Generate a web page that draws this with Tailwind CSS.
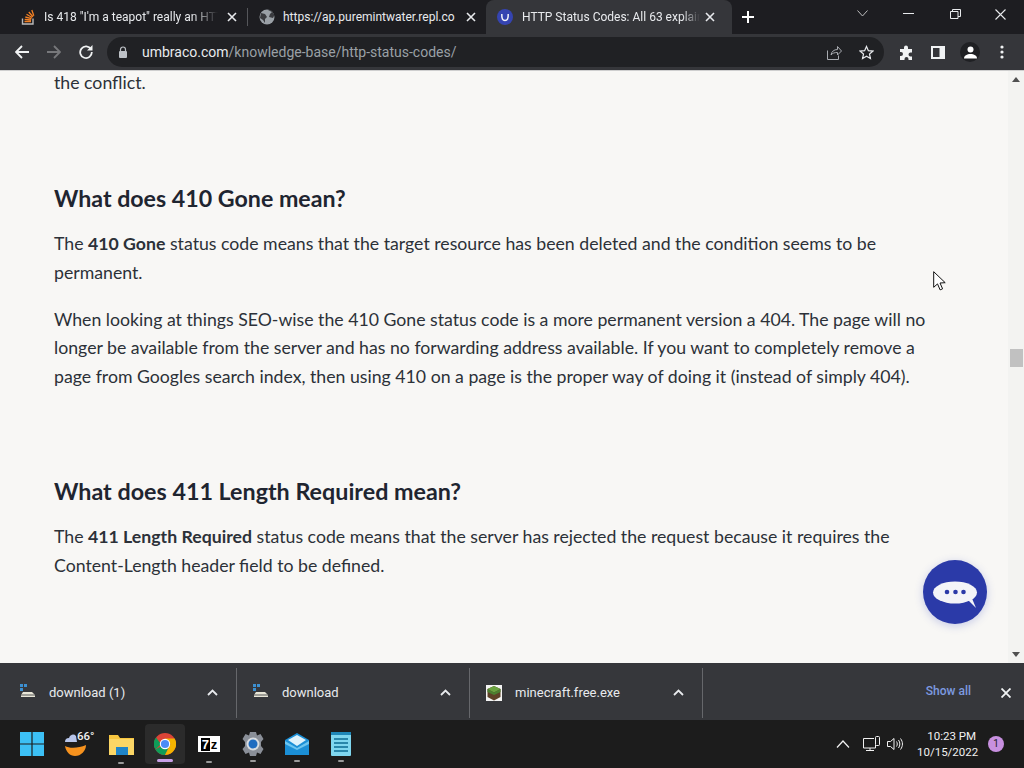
<!DOCTYPE html>
<html><head><meta charset="utf-8"><script src="https://cdn.jsdelivr.net/npm/@tailwindcss/browser@4"></script></head>
<body class="m-0 overflow-hidden bg-[#202124]">
<div class="w-[1024px] h-[768px] flex flex-col overflow-hidden font-['Roboto',sans-serif]">
  <!-- Tab strip -->
  <div class="h-[34px] shrink-0 bg-[#1d1d21] flex items-stretch text-[12px] text-[#e8eaed]">
    <div class="w-[248px] pl-[21px] flex items-center relative">
      <svg class="w-[14px] h-[16px] shrink-0" viewBox="0 0 14 16"><path d="M1.500 9.500v5.500h10.500V9.500" fill="none" stroke="#bcbbbb" stroke-width="1.400"/><path d="M3.500 12.500h6.500M3.700 10.400l6.400.6M4.300 8l6.200 1.700M5.500 5.300l5.600 3.200M7.800 3l4.200 4.800M10.800 1l2 5.700" stroke="#f48024" stroke-width="1.300" fill="none"/></svg>
      <span class="ml-[9px] w-[174px] whitespace-nowrap overflow-hidden [mask-image:linear-gradient(to_right,black_85%,transparent)]">Is 418 "I'm a teapot" really an HTTP</span>
      <svg class="ml-[9px] w-[10px] h-[10px]" viewBox="0 0 10 10"><path d="M1 1l8 8M9 1l-8 8" stroke="#e8eaed" stroke-width="1.600"/></svg>
      <div class="absolute right-0 top-[8px] h-[18px] w-px bg-[#55565a]"></div>
    </div>
    <div class="w-[238px] pl-[11px] flex items-center">
      <svg class="w-[16px] h-[16px] shrink-0" viewBox="0 0 16 16"><circle cx="8" cy="8" r="7.500" fill="#9aa0a6"/><path d="M2 4l4 1 2 3-2 2 0 4-2-3-3-2zM9 1l4 2-2 2-1 3 4 1 1-2 0-2-3-4z" fill="#3a3b3f"/></svg>
      <span class="ml-[8px] w-[175px] whitespace-nowrap overflow-hidden">https://ap.puremintwater.repl.co</span>
      <svg class="ml-[8px] w-[10px] h-[10px]" viewBox="0 0 10 10"><path d="M1 1l8 8M9 1l-8 8" stroke="#e8eaed" stroke-width="1.600"/></svg>
    </div>
    <div class="w-[246px] pl-[11px] flex items-center bg-[#35363a] rounded-t-[8px]">
      <svg class="w-[16px] h-[16px] shrink-0" viewBox="0 0 16 16"><circle cx="8" cy="8" r="8" fill="#3544b1"/><path d="M4.800 5c-.2 5 1 6.500 3.200 6.500S11.400 10 11.200 5" stroke="#f3f4f8" stroke-width="1.500" fill="none"/></svg>
      <span class="ml-[9px] w-[178px] whitespace-nowrap overflow-hidden [mask-image:linear-gradient(to_right,black_90%,transparent)]">HTTP Status Codes: All 63 explained</span>
      <svg class="ml-[5px] w-[10px] h-[10px]" viewBox="0 0 10 10"><path d="M1 1l8 8M9 1l-8 8" stroke="#e8eaed" stroke-width="1.600"/></svg>
    </div>
    <div class="w-[31px] flex items-center justify-center">
      <svg class="w-[12px] h-[12px]" viewBox="0 0 12 12"><path d="M6 0v12M0 6h12" stroke="#fff" stroke-width="2"/></svg>
    </div>
    <div class="flex-1 flex items-start pl-[94px] pt-[10px]">
      <svg class="w-[11px] h-[7px]" viewBox="0 0 11 7"><path d="M.5.500l5 5.500 5-5.500" stroke="#bdbdbd" fill="none"/></svg>
      <svg class="ml-[35px] mt-[3px] w-[11px] h-[1px]" viewBox="0 0 11 1"><path d="M0 .5h11" stroke="#e8eaed"/></svg>
      <svg class="ml-[36px] w-[11px] h-[10px] -mt-[1px]" viewBox="0 0 11 10"><path d="M.5 2.500h7.500v7H.5zM2.500 2.500V.5h8v7H8" stroke="#e8eaed" fill="none"/></svg>
      <svg class="ml-[34px] w-[11px] h-[11px] -mt-[1px]" viewBox="0 0 11 11"><path d="M.5.500l10 10M10.500.500l-10 10" stroke="#e8eaed" stroke-width="1.100"/></svg>
    </div>
  </div>
  <!-- Toolbar -->
  <div class="h-[36px] shrink-0 bg-[#35363a] flex items-center">
    <svg class="ml-[15px] w-[14px] h-[14px]" viewBox="0 0 14 14"><path d="M7 1L1 7l6 6M1 7h13" stroke="#f1f3f4" stroke-width="1.800" fill="none"/></svg>
    <svg class="ml-[18px] w-[14px] h-[14px]" viewBox="0 0 14 14"><path d="M7 1l6 6-6 6M13 7H0" stroke="#77787b" stroke-width="1.800" fill="none"/></svg>
    <svg class="ml-[18px] w-[14px] h-[14px]" viewBox="0 0 14 14"><path d="M12 4.300A5.800 5.800 0 1 0 12.800 7" stroke="#f1f3f4" stroke-width="1.800" fill="none"/><path d="M13.500 0v5.500H8z" fill="#f1f3f4"/></svg>
    <div class="ml-[14px] w-[777px] h-[30px] rounded-full bg-[#202124] flex items-center">
      <svg class="ml-[11px] w-[10px] h-[12px]" viewBox="0 0 10 12"><path d="M2.500 5V3.500a2.500 2.500 0 0 1 5 0V5" stroke="#bdc1c6" stroke-width="1.200" fill="none"/><rect x="1" y="5" width="8" height="7" rx="1" fill="#bdc1c6"/></svg>
      <span class="ml-[14px] text-[14px]"><span class="text-[#e8eaed]">umbraco.com</span><span class="text-[#9aa0a6]">/knowledge-base/http-status-codes/</span></span>
      <div class="ml-auto flex items-center mr-[10px] gap-[17px]">
        <svg class="w-[15px] h-[15px]" viewBox="0 0 15 15"><path d="M.5 5.500v9h11v-4M4 10c.5-3.500 3-5.500 6.500-5.500V1.500l4 4.500-4 4V7.500C7.500 7.500 5.500 8 4 10z" stroke="#a8abb0" fill="none"/></svg>
        <svg class="w-[15px] h-[15px]" viewBox="0 0 16 16"><path d="M8 1.500l2 4.500 4.800.5-3.600 3.200 1 4.800L8 12l-4.200 2.500 1-4.800L1.200 6.500 6 6z" stroke="#e8eaed" stroke-width="1.300" fill="none"/></svg>
      </div>
    </div>
    <svg class="ml-[15px] w-[15px] h-[15px]" viewBox="0 0 15 15"><path d="M5 2.500a2 2 0 0 1 4 0V4h4v3.500h-1.500a2 2 0 0 0 0 4H13V15H9.500v-1a2 2 0 0 0-4 0v1H1v-4h1a2 2 0 0 0 0-4H1V4h4z" fill="#f1f3f4"/></svg>
    <svg class="ml-[17px] w-[14px] h-[13px]" viewBox="0 0 14 13"><path d="M0 0h14v13H0z" fill="#f1f3f4"/><path d="M2 2h6.500v9H2z" fill="#35363a"/></svg>
    <div class="ml-[15px] w-[20px] h-[20px] rounded-full bg-[#1f2023] flex items-center justify-center">
      <svg class="w-[13px] h-[13px]" viewBox="0 0 13 13"><circle cx="6.500" cy="3.500" r="3" fill="#fff"/><path d="M0 12.500c0-3 3-4.500 6.500-4.500s6.500 1.500 6.500 4.500z" fill="#fff"/></svg>
    </div>
    <svg class="ml-[20px] w-[4px] h-[14px]" viewBox="0 0 4 14"><circle cx="2" cy="2" r="1.600" fill="#f1f3f4"/><circle cx="2" cy="7" r="1.600" fill="#f1f3f4"/><circle cx="2" cy="12" r="1.600" fill="#f1f3f4"/></svg>
  </div>
  <!-- Page -->
  <div class="h-[593px] shrink-0 bg-[#f8f7f5] relative flex overflow-hidden border-t border-[#cfcfcf]">
    <div class="flex-1 pl-[54px] pr-[80px] -mt-[2.4px] font-['Lato',sans-serif] text-[17.7px] leading-[28.8px] text-[#2c3138]">
      <p>the conflict.</p>
      <h2 class="mt-[86px] mb-[16px] text-[23.2px] leading-[31px] font-bold text-[#1f2530]">What does 410 Gone mean?</h2>
      <p class="mb-[17.6px]">The <b>410 Gone</b> status code means that the target resource has been deleted and the condition seems to be permanent.</p>
      <p>When looking at things SEO-wise the 410 Gone status code is a more permanent version a 404. The page will no longer be available from the server and has no forwarding address available. If you want to completely remove a page from Googles search index, then using 410 on a page is the proper way of doing it (instead of simply 404).</p>
      <h2 class="mt-[84.5px] mb-[16px] text-[23.3px] leading-[31px] font-bold text-[#1f2530]">What does 411 Length Required mean?</h2>
      <p>The <b>411 Length Required</b> status code means that the server has rejected the request because it requires the Content-Length header field to be defined.</p>
    </div>
    <div class="w-[16px] shrink-0 bg-[#f3f3f1] flex flex-col items-center pt-[6px] pb-[6px]">
      <svg class="w-[8px] h-[5px]" viewBox="0 0 8 5"><path d="M4 0l4 5H0z" fill="#505050"/></svg>
      <div class="mt-[267px] w-[13px] h-[18px] bg-[#c1c1c1]"></div>
      <svg class="mt-auto w-[8px] h-[5px]" viewBox="0 0 8 5"><path d="M0 0h8L4 5z" fill="#505050"/></svg>
    </div>
    <svg class="absolute left-[933px] top-[200px] w-[13px] h-[20px]" viewBox="0 0 13 20"><path d="M.7.700v15.600l3.800-3.400 2.600 6 2.500-1.100-2.600-5.800 5.200-.3z" fill="#fff" stroke="#111" stroke-width="1"/></svg>
    <div class="absolute left-[923px] top-[489px] w-[64px] h-[64px] rounded-full bg-[#2b3aa8] shadow-[0_2px_8px_rgba(50,70,190,0.25)] flex items-center justify-center">
      <svg class="w-[46px] h-[36px]" viewBox="0 0 46 36"><ellipse cx="23" cy="18.500" rx="22" ry="11" fill="#f3f4f8"/><path d="M36 26l8 8-5-12z" fill="#f3f4f8"/><circle cx="15" cy="18" r="2.300" fill="#2b3aa8"/><circle cx="23.500" cy="18" r="2.300" fill="#2b3aa8"/><circle cx="31.500" cy="18" r="2.300" fill="#2b3aa8"/></svg>
    </div>
  </div>
  <!-- Download shelf -->
  <div class="h-[57px] shrink-0 bg-[#36373b] flex items-center text-[13px] text-[#e8eaed] pt-[2px]">
    <div class="w-[237px] h-[50px] pl-[20px] flex items-center border-r border-[#66676b]">
      <svg class="w-[16px] h-[13px] -mt-[5px]" viewBox="0 0 16 13"><path d="M0 0h3v3H0zM4 0h3v3H4zM0 4h3v3H0z" fill="#3c8fd0"/><path d="M3 8h9l3 3v2H1v-2z" fill="#e8e6d8"/><path d="M1 11h14" stroke="#555"/></svg>
      <span class="ml-[13px]">download (1)</span>
      <svg class="ml-auto mr-[18px] w-[11px] h-[7px]" viewBox="0 0 11 7"><path d="M1 6l4.500-4.500L10 6" stroke="#e8eaed" stroke-width="1.800" fill="none"/></svg>
    </div>
    <div class="w-[233px] h-[50px] pl-[16px] flex items-center border-r border-[#66676b]">
      <svg class="w-[16px] h-[13px] -mt-[5px]" viewBox="0 0 16 13"><path d="M0 0h3v3H0zM4 0h3v3H4zM0 4h3v3H0z" fill="#3c8fd0"/><path d="M3 8h9l3 3v2H1v-2z" fill="#e8e6d8"/><path d="M1 11h14" stroke="#555"/></svg>
      <span class="ml-[13px]">download</span>
      <svg class="ml-auto mr-[18px] w-[11px] h-[7px]" viewBox="0 0 11 7"><path d="M1 6l4.500-4.500L10 6" stroke="#e8eaed" stroke-width="1.800" fill="none"/></svg>
    </div>
    <div class="w-[233px] h-[50px] pl-[16px] flex items-center border-r border-[#66676b]">
      <svg class="w-[16px] h-[16px]" viewBox="0 0 16 16"><rect width="16" height="16" fill="#f4f4f4"/><path d="M8 1l6.500 3v8L8 15.500 1.500 12V4z" fill="#5e4127"/><path d="M8 1l6.500 3L8 7.500 1.500 4z" fill="#6aa340"/><path d="M1.500 4L8 7.500V10L1.500 7zM14.500 4L8 7.500V10l6.500-3z" fill="#4c8030"/></svg>
      <span class="ml-[13px]">minecraft.free.exe</span>
      <svg class="ml-auto mr-[18px] w-[11px] h-[7px]" viewBox="0 0 11 7"><path d="M1 6l4.500-4.500L10 6" stroke="#e8eaed" stroke-width="1.800" fill="none"/></svg>
    </div>
    <div class="flex-1 flex items-center justify-end">
      <span class="text-[12px] font-medium text-[#7d9ae0] mr-[30px] -mt-[4px]">Show all</span>
      <svg class="mr-[13px] w-[10px] h-[10px]" viewBox="0 0 10 10"><path d="M.5.500l9 9M9.500.500l-9 9" stroke="#f1f3f4" stroke-width="1.800"/></svg>
    </div>
  </div>
  <!-- Taskbar -->
  <div class="h-[48px] shrink-0 bg-[#1c1c1c] flex items-center">
    <svg class="ml-[20px] w-[24px] h-[24px]" viewBox="0 0 24 24"><path d="M0 0h11.400v11.400H0zM12.600 0H24v11.400H12.600zM0 12.600h11.400V24H0zM12.600 12.600H24V24H12.600z" fill="#3cc0f5"/></svg>
    <div class="ml-[20px] w-[32px] h-[32px] relative">
      <svg class="w-[24px] h-[26px] mt-[3px]" viewBox="0 0 24 26"><path d="M1 11a4 4 0 0 1 4-4 4 4 0 0 1 7-2l1 6z" fill="#b7c5ea"/><path d="M1 15c5 3 14 2 21-1 0 6-5 11-11 11-5 0-9-4-10-10z" fill="#f6921e"/></svg>
      <span class="absolute left-[13px] top-[1px] text-[11.5px] leading-[14px] font-medium text-[#f1f1f1]">66°</span>
    </div>
    <div class="ml-[12px] w-[26px] relative flex justify-center">
      <svg class="w-[25px] h-[22px]" viewBox="0 0 25 22"><path d="M0 2h9l2 3h14v4H0z" fill="#f7c63f"/><path d="M0 6h25v16H0z" fill="#fbd665"/><rect x="7" y="14" width="12" height="8" fill="#1f85c9"/></svg>
      <div class="absolute left-[10px] top-[29px] w-[6px] h-[2px] rounded bg-[#9a9a9a]"></div>
    </div>
    <div class="ml-[11px] w-[40px] h-[40px] rounded-[4px] bg-[#2b2b2b] relative flex items-center justify-center">
      <svg class="w-[22px] h-[22px]" viewBox="0 0 22 22"><circle cx="11" cy="11" r="11" fill="#db4437"/><path d="M11 11L1.400 16.500A11 11 0 0 0 11 22L16.500 11z" fill="#0f9d58"/><path d="M11 22a11 11 0 0 0 9.600-16.500H11L16.500 11z" fill="#f4b400"/><path d="M1.400 16.500A11 11 0 0 1 2 4.500L7 11z" fill="#0f9d58"/><circle cx="11" cy="11" r="5.200" fill="#fff"/><circle cx="11" cy="11" r="4.100" fill="#4a8bf5"/></svg>
      <div class="absolute left-[12px] bottom-[2px] w-[16px] h-[3px] rounded bg-[#c9a0e8]"></div>
    </div>
    <div class="ml-[13px] w-[22px] relative flex justify-center">
      <div class="w-[22px] h-[16px] bg-white flex items-center justify-center gap-[1px] font-['Liberation_Sans',sans-serif] text-[13px] leading-[13px] font-bold"><span class="bg-black text-white px-[1px]">7</span><span class="bg-white text-black">z</span></div>
      <div class="absolute left-[8px] top-[25px] w-[6px] h-[2px] rounded bg-[#9a9a9a]"></div>
    </div>
    <div class="ml-[21px] w-[24px] relative flex justify-center">
      <svg class="w-[24px] h-[24px]" viewBox="0 0 24 24"><path d="M9 0h6l1 3.500 3.500-1.500 3 5-2.500 3v4l2.500 3-3 5-3.500-1.500L15 24H9l-1-3.500L4.500 22l-3-5L4 14v-4L1.500 7l3-5L8 3.500z" fill="#8a8f98"/><circle cx="12" cy="12" r="6.500" fill="#d8dce0"/><circle cx="12" cy="12" r="4.500" fill="#1f6cc0"/></svg>
      <div class="absolute left-[9px] top-[28px] w-[6px] h-[2px] rounded bg-[#9a9a9a]"></div>
    </div>
    <div class="ml-[20px] w-[24px] relative flex justify-center">
      <svg class="w-[24px] h-[22px]" viewBox="0 0 24 22"><path d="M12 0l12 7v15H0V7z" fill="#1b8fd6"/><path d="M3 7l9-5 9 5-9 6z" fill="#dff2fb"/><path d="M0 8l12 7 12-7v3l-12 6-12-6z" fill="#6cc5f0"/></svg>
      <div class="absolute left-[9px] top-[27px] w-[6px] h-[2px] rounded bg-[#9a9a9a]"></div>
    </div>
    <div class="ml-[22px] w-[20px] relative flex justify-center">
      <svg class="w-[20px] h-[24px]" viewBox="0 0 20 24"><rect width="20" height="24" rx="1" fill="#7fd6ef"/><path d="M0 0h20v3H0z" fill="#1f87b8"/><path d="M3 7h14M3 11h14M3 15h14M3 19h14" stroke="#0e6c94" stroke-width="1.500"/></svg>
      <div class="absolute left-[7px] top-[28px] w-[6px] h-[2px] rounded bg-[#9a9a9a]"></div>
    </div>
    <svg class="ml-[485px] w-[14px] h-[8px]" viewBox="0 0 14 8"><path d="M1 7.500L7 1l6 6.500" stroke="#f1f1f1" stroke-width="1.200" fill="none"/></svg>
    <svg class="ml-[13px] w-[17px] h-[16px]" viewBox="0 0 17 16"><path d="M11 2.500H.5v9.500h12V9M3 14.500h8M7 12v2.500" stroke="#f1f1f1" fill="none"/><rect x="12.500" y=".5" width="4" height="9" rx="1" stroke="#f1f1f1" fill="none"/></svg>
    <svg class="ml-[7px] w-[17px] h-[14px]" viewBox="0 0 17 14"><path d="M.5 4.500h3L7 1.500v11l-3.500-3h-3zM9.500 4.500c1 1.500 1 3.500 0 5M11.500 3c1.800 2.500 1.800 5.500 0 8M13.500 1.500c2.600 3.500 2.600 7.500 0 11" stroke="#f1f1f1" fill="none"/></svg>
    <div class="ml-[13px] w-[59px] text-right text-[#f1f1f1] text-[11.5px] leading-[16px]">
      <div>10:23 PM</div><div>10/15/2022</div>
    </div>
    <div class="ml-[12px] w-[16px] h-[16px] rounded-full bg-[#c890e0] text-[#1c1c1c] text-[10px] leading-[16px] text-center">1</div>
  </div>
</div>
</body></html>
